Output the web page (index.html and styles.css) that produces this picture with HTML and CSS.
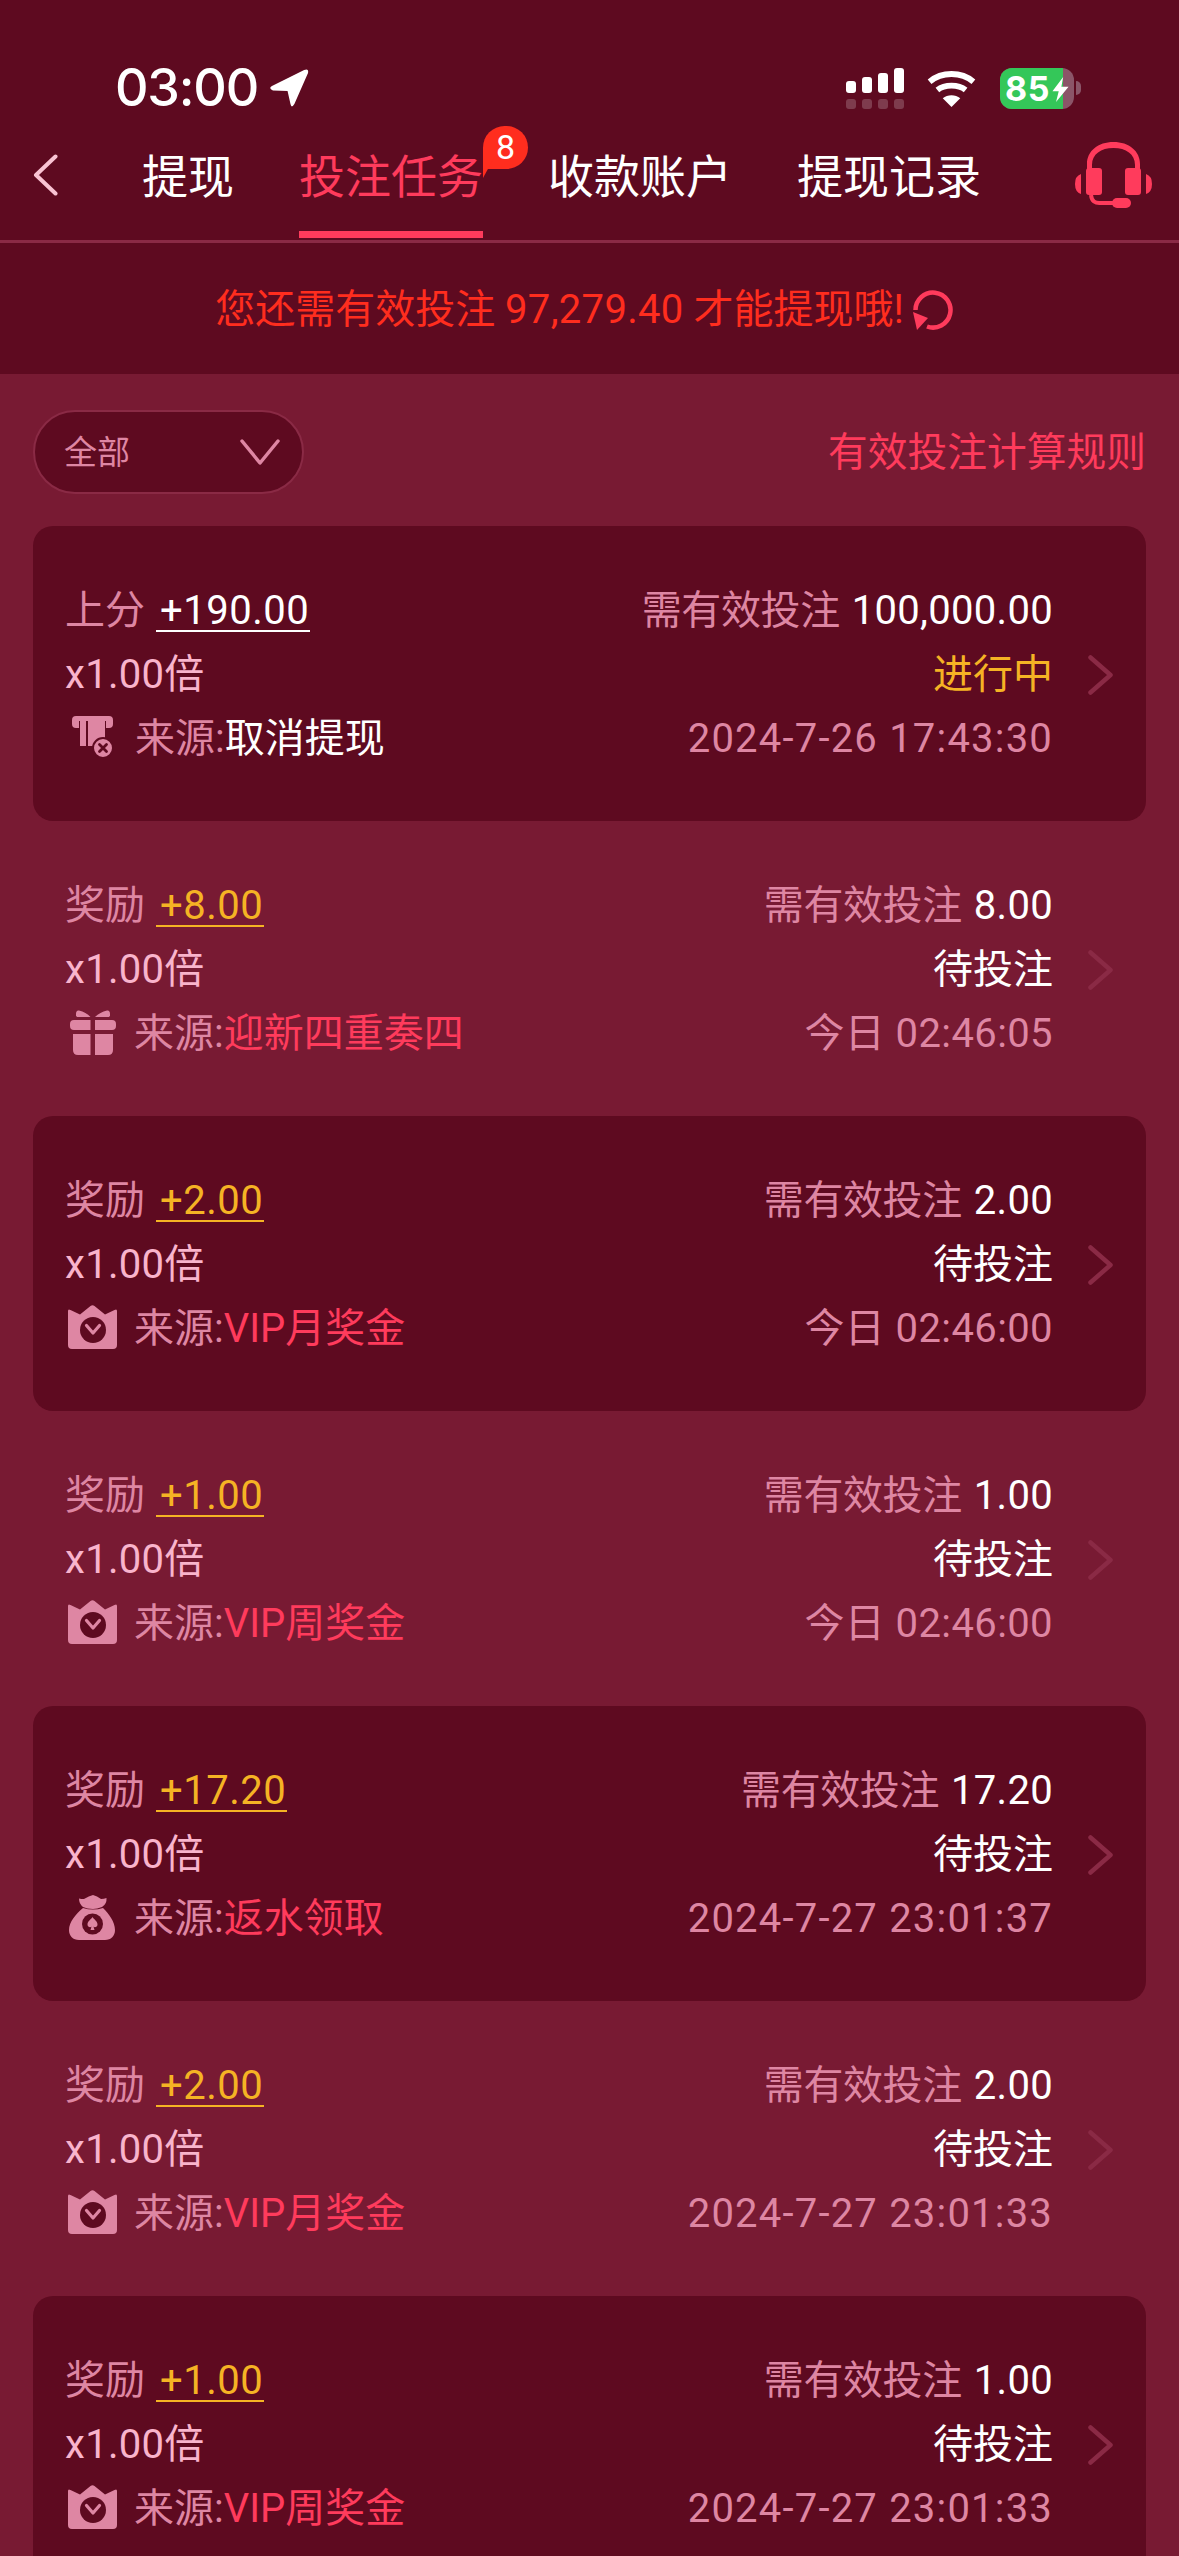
FILE: index.html
```html
<!DOCTYPE html>
<html lang="zh-CN">
<head>
<meta charset="utf-8">
<title>投注任务</title>
<link rel="stylesheet" href="styles.css">
</head>
<body>
<svg class="defs" width="0" height="0" aria-hidden="true">
  <symbol id="i-crown" viewBox="0 0 49 44">
    <path fill="#de86a3" d="M0 6Q0 3.500 2.500 5L12 9.500 22.500 1Q24.500 -.5 26.500 1L37 9.500 46.500 5Q49 3.500 49 6V40Q49 44 45 44H4Q0 44 0 40Z"/>
    <circle cx="25" cy="25" r="13" fill="#5e0a20"/>
    <path d="M18.500 20.500 25 28 31.500 20.500" fill="none" stroke="#de86a3" stroke-width="3.200" stroke-linecap="round" stroke-linejoin="round"/>
  </symbol>
  <symbol id="i-atm" viewBox="0 0 42 42">
    <path fill="#de86a3" d="M4 0H37Q41 0 41 4V8Q41 12 37 12H34V5H7V12H4Q0 12 0 8V4Q0 0 4 0Z"/>
    <path fill="#de86a3" d="M8 5H14V30H8ZM16 5H33V30H16Z"/>
    <circle cx="31" cy="32" r="10" fill="#de86a3" stroke="#5e0a20" stroke-width="2"/>
    <path d="M27.500 28.500 34.500 35.500M34.500 28.500 27.500 35.500" stroke="#5e0a20" stroke-width="2.800" stroke-linecap="round"/>
  </symbol>
  <symbol id="i-gift" viewBox="0 0 46 45">
    <path fill="#de86a3" d="M4 10H20.500V20H4Q0 20 0 16V14Q0 10 4 10ZM25 10H42Q46 10 46 14V16Q46 20 42 20H25ZM3 24H20.500V45H8Q3 45 3 40ZM25 24H43V40Q43 45 38 45H25Z"/>
    <path fill="#de86a3" d="M6 4Q6 0 9 .5 16 2 20.500 7H7Q5.500 6 6 4ZM25 7Q30 2 37 .5 40 0 40 4 40.500 6 39 7Z"/>
  </symbol>
  <symbol id="i-bag" viewBox="0 0 46 45">
    <path fill="#de86a3" d="M10 3.500Q12 4 15 4 20 1 24 0 28 1 32 4 35 4 37.500 3 38 9 33 12 28 14 24 14 18 14 14 12 10 9 10 3.500Z"/>
    <path fill="#de86a3" d="M14 13Q24 16 34 13C40 19 46 27 46 35 46 41 42 45 36 45H10C4 45 0 41 0 35 0 27 7 19 14 13Z"/>
    <circle cx="23.500" cy="29" r="10.500" fill="#5e0a20"/>
    <path fill="#de86a3" d="M23.500 22C25 24.500 28.500 26 28.500 29.500 28.500 32 25.500 33 24.500 31.500L25.500 35H21.500L22.500 31.500C21.500 33 18.500 32 18.500 29.500 18.500 26 22 24.500 23.500 22Z"/>
  </symbol>
  <symbol id="i-chev" viewBox="0 0 25 40">
    <path d="M2.500 2.500 22.500 20 2.500 37.500" fill="none" stroke="#8a2a45" stroke-width="4.500" stroke-linecap="round" stroke-linejoin="round"/>
  </symbol>
</svg>

<div class="app">
  <header class="top">
    <div class="status">
      <div class="status-left">
        <span class="clock">03:00</span>
        <svg class="locate" viewBox="0 0 40 39"><path fill="#fff" d="M2 17.500 35 1Q40 -1 39 4L25 36Q22 41 21 36L18 22.500 3 22Q-2 20 2 17.500Z"/></svg>
      </div>
      <div class="status-right">
        <svg class="signal" viewBox="0 0 58 41">
          <g fill="#fff"><rect x="0" y="13" width="10" height="12" rx="3"/><rect x="16" y="9" width="10" height="16" rx="3"/><rect x="32" y="5" width="10" height="20" rx="3"/><rect x="48" y="0" width="10" height="25" rx="3"/></g>
          <g fill="#fff" opacity=".2"><rect x="0" y="31" width="10" height="10" rx="3"/><rect x="16" y="31" width="10" height="10" rx="3"/><rect x="32" y="31" width="10" height="10" rx="3"/><rect x="48" y="31" width="10" height="10" rx="3"/></g>
        </svg>
        <svg class="wifi" viewBox="0 0 50 38"><g fill="none" stroke="#fff" stroke-width="6"><path d="M2.500 12C15 1.500 35 1.500 47.500 12"/><path d="M10.500 20.500C18 14.500 32 14.500 39.500 20.500"/></g><path fill="#fff" d="M25 38 16 29C21 25 29 25 34 29Z"/></svg>
        <div class="battery">
          <div class="batt-body"><span class="batt-fill"></span><span class="batt-num">85</span>
            <svg class="bolt" viewBox="0 0 18 28"><path fill="#fff" d="M12 0 0 16H7L4 28 18 11H10Z"/></svg>
          </div>
          <span class="batt-cap"></span>
        </div>
      </div>
    </div>
    <nav class="nav">
      <svg class="back" viewBox="0 0 25 42"><path d="M22.500 2.500 3 21 22.500 39.500" fill="none" stroke="#f9c3d3" stroke-width="4" stroke-linecap="round" stroke-linejoin="round"/></svg>
      <div class="tabs">
        <span class="tab">提现</span>
        <span class="tab tab-on">投注任务<span class="badge">8</span></span>
        <span class="tab">收款账户</span>
        <span class="tab">提现记录</span>
      </div>
      <svg class="headset" viewBox="0 0 77 66">
        <g fill="#ff3b5c">
          <path d="M12 32V22C12 9 23 0 38.500 0S65 9 65 22V32H60V23C60 12 51 6 38.500 6S17 12 17 23V32Z"/>
          <rect x="11" y="26" width="16" height="27" rx="3"/>
          <rect x="50" y="26" width="16" height="27" rx="3"/>
          <path d="M6 32V52Q0 50 0 42T6 32ZM71 32V52Q77 50 77 42T71 32Z"/>
          <rect x="37" y="56" width="19" height="10" rx="5"/>
        </g>
        <path d="M16 53Q17 62 26 61H38" fill="none" stroke="#ff3b5c" stroke-width="4"/>
      </svg>
    </nav>
    <div class="notice">
      <span class="notice-text">您还需有效投注 <span class="notice-num">97,279.40</span> 才能提现哦!</span>
      <svg class="refresh" viewBox="0 0 40 41"><path d="M2.500 21A17.500 17.500 0 1 1 14 37.500" fill="none" stroke="#ff3b5c" stroke-width="4.500"/><path fill="#ff3b5c" d="M0 23 15 29 4 41Z"/></svg>
    </div>
  </header>

  <main class="main">
    <div class="toolbar">
      <div class="select">
        <span class="select-text">全部</span>
        <svg class="select-arrow" viewBox="0 0 40 26"><path d="M2 2 20 24 38 2" fill="none" stroke="#de86a3" stroke-width="3.500" stroke-linecap="round" stroke-linejoin="round"/></svg>
      </div>
      <span class="rule-link">有效投注计算规则</span>
    </div>

    <section class="list">
      <article class="card card-dark">
        <div class="col-left">
          <div class="row"><span class="label">上分</span><span class="amount amount-white">+190.00</span></div>
          <div class="row multi">x1.00倍</div>
          <div class="row source"><svg class="ico ico-atm"><use href="#i-atm"/></svg><span class="label">来源:</span><span class="white">取消提现</span></div>
        </div>
        <div class="col-right">
          <div class="row"><span class="label need-label">需有效投注</span><span class="need">100,000.00</span></div>
          <div class="row yellow">进行中</div>
          <div class="row label date">2024-7-26 17:43:30</div>
        </div>
        <svg class="chev"><use href="#i-chev"/></svg>
      </article>

      <article class="card">
        <div class="col-left">
          <div class="row"><span class="label">奖励</span><span class="amount">+8.00</span></div>
          <div class="row multi">x1.00倍</div>
          <div class="row source"><svg class="ico ico-gift"><use href="#i-gift"/></svg><span class="label">来源:</span><span class="hot">迎新四重奏四</span></div>
        </div>
        <div class="col-right">
          <div class="row"><span class="label need-label">需有效投注</span><span class="need">8.00</span></div>
          <div class="row white">待投注</div>
          <div class="row label today">今日 02:46:05</div>
        </div>
        <svg class="chev"><use href="#i-chev"/></svg>
      </article>

      <article class="card card-dark">
        <div class="col-left">
          <div class="row"><span class="label">奖励</span><span class="amount">+2.00</span></div>
          <div class="row multi">x1.00倍</div>
          <div class="row source"><svg class="ico ico-crown"><use href="#i-crown"/></svg><span class="label">来源:</span><span class="hot">VIP月奖金</span></div>
        </div>
        <div class="col-right">
          <div class="row"><span class="label need-label">需有效投注</span><span class="need">2.00</span></div>
          <div class="row white">待投注</div>
          <div class="row label today">今日 02:46:00</div>
        </div>
        <svg class="chev"><use href="#i-chev"/></svg>
      </article>

      <article class="card">
        <div class="col-left">
          <div class="row"><span class="label">奖励</span><span class="amount">+1.00</span></div>
          <div class="row multi">x1.00倍</div>
          <div class="row source"><svg class="ico ico-crown"><use href="#i-crown"/></svg><span class="label">来源:</span><span class="hot">VIP周奖金</span></div>
        </div>
        <div class="col-right">
          <div class="row"><span class="label need-label">需有效投注</span><span class="need">1.00</span></div>
          <div class="row white">待投注</div>
          <div class="row label today">今日 02:46:00</div>
        </div>
        <svg class="chev"><use href="#i-chev"/></svg>
      </article>

      <article class="card card-dark">
        <div class="col-left">
          <div class="row"><span class="label">奖励</span><span class="amount">+17.20</span></div>
          <div class="row multi">x1.00倍</div>
          <div class="row source"><svg class="ico ico-bag"><use href="#i-bag"/></svg><span class="label">来源:</span><span class="hot">返水领取</span></div>
        </div>
        <div class="col-right">
          <div class="row"><span class="label need-label">需有效投注</span><span class="need">17.20</span></div>
          <div class="row white">待投注</div>
          <div class="row label date">2024-7-27 23:01:37</div>
        </div>
        <svg class="chev"><use href="#i-chev"/></svg>
      </article>

      <article class="card">
        <div class="col-left">
          <div class="row"><span class="label">奖励</span><span class="amount">+2.00</span></div>
          <div class="row multi">x1.00倍</div>
          <div class="row source"><svg class="ico ico-crown"><use href="#i-crown"/></svg><span class="label">来源:</span><span class="hot">VIP月奖金</span></div>
        </div>
        <div class="col-right">
          <div class="row"><span class="label need-label">需有效投注</span><span class="need">2.00</span></div>
          <div class="row white">待投注</div>
          <div class="row label date">2024-7-27 23:01:33</div>
        </div>
        <svg class="chev"><use href="#i-chev"/></svg>
      </article>

      <article class="card card-dark">
        <div class="col-left">
          <div class="row"><span class="label">奖励</span><span class="amount">+1.00</span></div>
          <div class="row multi">x1.00倍</div>
          <div class="row source"><svg class="ico ico-crown"><use href="#i-crown"/></svg><span class="label">来源:</span><span class="hot">VIP周奖金</span></div>
        </div>
        <div class="col-right">
          <div class="row"><span class="label need-label">需有效投注</span><span class="need">1.00</span></div>
          <div class="row white">待投注</div>
          <div class="row label date">2024-7-27 23:01:33</div>
        </div>
        <svg class="chev"><use href="#i-chev"/></svg>
      </article>
    </section>
  </main>
</div>
</body>
</html>
```
FILE: styles.css
```css
* { box-sizing: border-box; }
html, body { margin: 0; height: 2556px; overflow: hidden; background: #781a33; }
body { font-family: Roboto, "Noto Sans CJK SC", sans-serif; font-size: 40px; color: #fff; }
.defs { position: absolute; }
.app { width: 1179px; height: 2556px; overflow: hidden; }

.top { background: #5e0a20; }
.status { height: 126px; padding: 58px 0 0 115px; display: flex; }
.status-left { display: flex; align-items: center; height: 60px; }
.clock { font-family: Inter, sans-serif; font-size: 52px; letter-spacing: -1.2px; font-weight: 500; line-height: 60px; }
.locate { width: 39px; height: 38px; margin-left: 12px; }
.status-right { display: flex; align-items: center; margin-left: auto; height: 60px; padding-right: 98px; }
.signal { width: 58px; height: 41px; }
.wifi { width: 49px; height: 37px; margin-left: 23px; }
.battery { display: flex; align-items: center; margin-left: 24px; }
.batt-body { position: relative; width: 74px; height: 41px; border-radius: 12px; overflow: hidden; background: #8b5568; display: flex; align-items: center; }
.batt-fill { position: absolute; left: 0; top: 0; bottom: 0; width: 63px; background: #34c759; }
.batt-num { position: relative; font-family: Inter, sans-serif; font-weight: 700; font-size: 34px; letter-spacing: .5px; padding-left: 5px; line-height: 41px; }
.bolt { position: absolute; left: 52px; top: 9px; width: 17px; height: 25px; }
.batt-cap { width: 5px; height: 14px; margin-left: 2px; border-radius: 0 5px 5px 0; background: #8b5568; }

.nav { height: 117px; display: flex; align-items: flex-start; border-bottom: 3px solid #8a2a45; padding-left: 33px; }
.back { width: 25px; height: 42px; margin-top: 28px; }
.tabs { display: flex; gap: 65px; margin-left: 84px; }
.tab { position: relative; font-size: 46px; line-height: 102px; height: 112px; padding-bottom: 3px; border-bottom: 7px solid transparent; white-space: nowrap; }
.tab-on { color: #ff3b5c; border-bottom-color: #ff3b5c; }
.badge { position: absolute; left: 100%; top: 0; width: 45px; height: 43px; background: #ff2d1e; border-radius: 22px 22px 22px 0; color: #fff; font-size: 34px; line-height: 43px; text-align: center; }
.badge::after { content: ""; position: absolute; left: 0; top: 30px; border-right: 12px solid transparent; border-top: 22px solid #ff2d1e; }
.headset { width: 77px; height: 66px; margin: 16px 27px 0 auto; }

.notice { height: 131px; display: flex; align-items: center; justify-content: center; padding: 2px 11px 0 0; }
.notice-text { color: #ff2d1e; white-space: nowrap; line-height: 56px; }
.notice-num { letter-spacing: .3px; }
.refresh { width: 40px; height: 41px; margin-left: 9px; }

.toolbar { display: flex; align-items: center; justify-content: space-between; padding: 36px 33px 32px 33px; }
.select { width: 271px; height: 84px; background: #5e0a20; border: 2px solid #8a2a45; border-radius: 42px; display: flex; align-items: center; justify-content: space-between; padding: 0 22px 0 29px; font-size: 33px; color: #de86a3; }
.select-text { padding-bottom: 4px; }
.select-arrow { width: 40px; height: 26px; }
.rule-link { color: #ff3b5c; font-size: 39.750px; padding-bottom: 8px; }

.list { display: flex; flex-direction: column; padding: 0 33px; }
.card { flex: none; height: 295px; display: flex; align-items: center; padding: 3px 33px 0 32px; border-radius: 20px; }
.card-dark { background: #5e0a20; }
.col-left { flex: 1; }
.col-right { text-align: right; }
.row { height: 64px; line-height: 64px; white-space: nowrap; }
.label { color: #de86a3; }
.white { color: #fff; }
.hot { color: #ff3b5c; }
.yellow { color: #f5b324; }
.multi { color: #f9b4cc; letter-spacing: .3px; }
.amount { display: inline-block; margin-left: 11px; padding: 0 1px 0 4px; line-height: 38px; letter-spacing: .5px; border-bottom: 2px solid #f5b324; color: #f5b324; }
.amount-white { color: #fff; border-bottom-color: #fff; }
.need-label { letter-spacing: -.4px; }
.need { color: #fff; margin-left: 12px; letter-spacing: .3px; }
.date { letter-spacing: 1.200px; }
.today { letter-spacing: .4px; }
.source { display: flex; align-items: center; }
.ico { flex: none; margin-top: -4px; }
.ico-atm { width: 42px; height: 42px; margin-left: 7px; margin-right: 21px; }
.ico-crown { width: 49px; height: 44px; margin-left: 3px; margin-right: 17px; }
.ico-gift { width: 46px; height: 45px; margin-left: 5px; margin-right: 18px; }
.ico-bag { width: 46px; height: 45px; margin-left: 4px; margin-right: 19px; }
.chev { width: 25px; height: 40px; margin-left: 35px; flex: none; }
```
